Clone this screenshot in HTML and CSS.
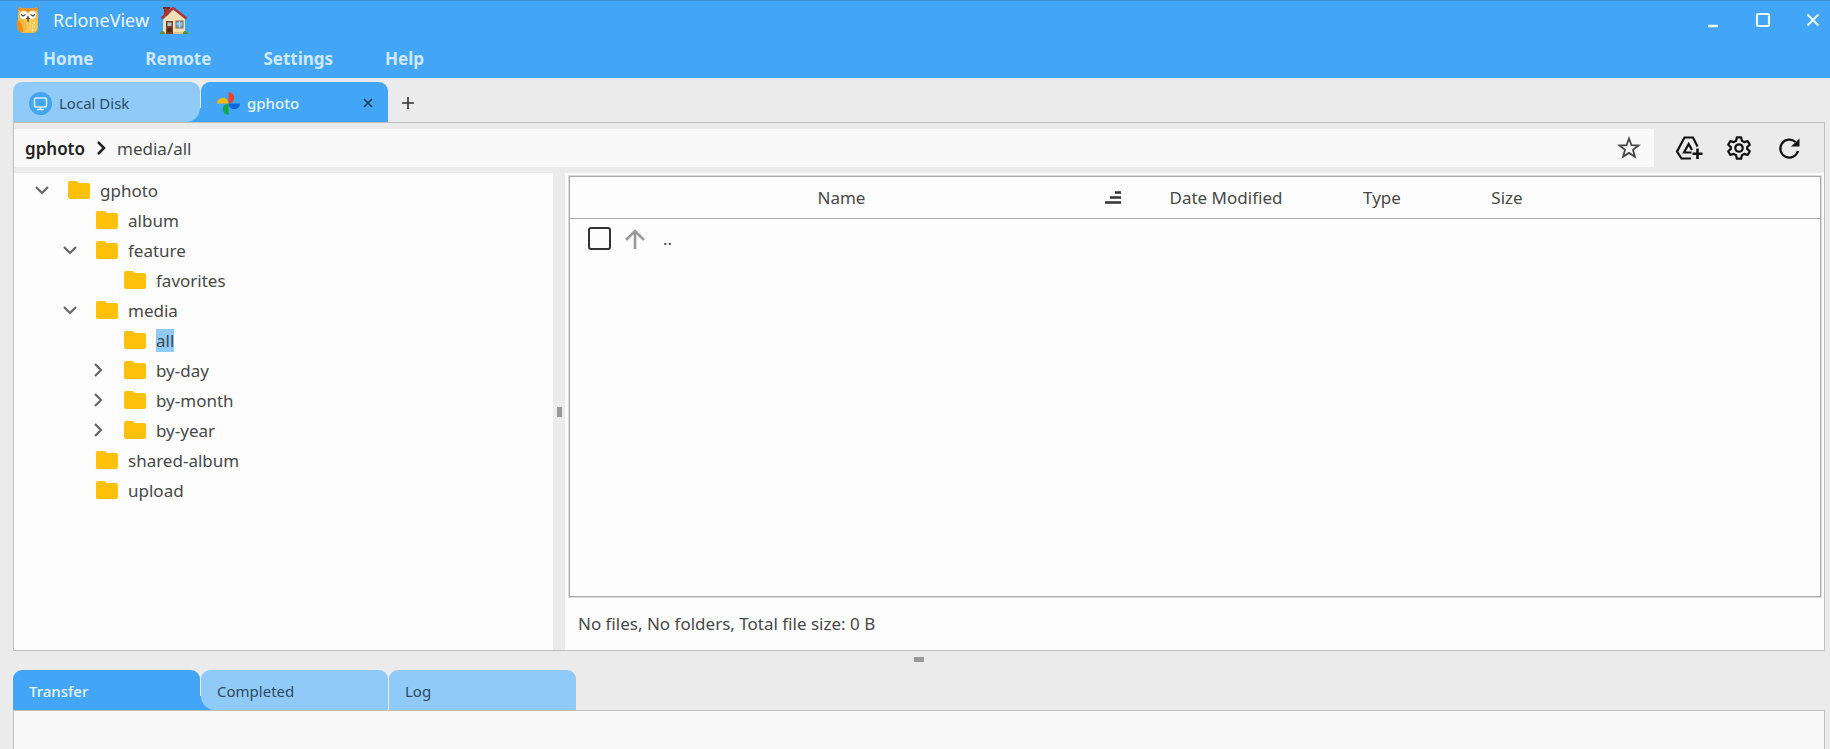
FILE: index.html
```
<!DOCTYPE html>
<html lang="en">
<head>
<meta charset="UTF-8">
<meta name="viewport" content="width=device-width, initial-scale=1">
<title>RcloneView</title>
<link rel="stylesheet" href="styles.css">
</head>
<body>
<!-- shared icons -->
<svg class="sprite" aria-hidden="true">
	<symbol id="folder" viewBox="0 0 22 18"><path fill="#ffc10a" d="M2 0h6.500l2.500 2h9a2 2 0 0 1 2 2v12a2 2 0 0 1-2 2H2a2 2 0 0 1-2-2V2a2 2 0 0 1 2-2z"/></symbol>
	<symbol id="down" viewBox="0 0 14 14"><path d="M1 4l6 6 6-6" fill="none" stroke="#666" stroke-width="2.200"/></symbol>
	<symbol id="right" viewBox="0 0 14 14"><path d="M4 1l6 6-6 6" fill="none" stroke="#666" stroke-width="2.200"/></symbol>
</svg>
<header class="header">
	<div class="title-bar">
		<svg class="owl" viewBox="0 0 22 26">
			<path fill="#f9b73c" d="M2 0l4 1.500h10L20 0l1 7v13q0 6-6 6H7q-6 0-6-6V7z"/>
			<path fill="#fdc650" d="M6 12h14v8q0 5-6 5H8q4-5-2-13z"/>
			<path fill="#f28c1b" d="M1 0l4.500 1.500h11L21 0l-1 4-5-1-4 2-4-2-5 1zM0 13q6 2 6 12-6 0-6-6z"/>
			<circle cx="6.800" cy="8" r="4" fill="#fff"/>
			<circle cx="15.200" cy="8" r="4" fill="#fff"/>
			<path d="M4 7.500l2 1.500 2.500-1.500M13.500 7.500L16 9l2-1.500M11 9v6M9 11.500h4" fill="none" stroke="#444" stroke-width="1.200"/>
			<path d="M13 17h1M17 16h1M15 19h1M12 21h1M17 20h1M15 23h1" stroke="#fff" stroke-width="1.500"/>
		</svg>
		<h1 class="app-name">RcloneView</h1>
		<svg class="house" viewBox="0 0 28 29">
			<path fill="#99382e" d="M4 2h5v8H4z"/>
			<path fill="#7a2822" d="M3 1h7v2H3z"/>
			<path fill="#f3dfb6" d="M3 14L14 3l11 10v15H3z"/>
			<path fill="#dcc08d" d="M3 26h22v2H3z"/>
			<path d="M1.500 12.500L13 2l13.500 10.500" fill="none" stroke="#b8322c" stroke-width="2.400"/>
			<path fill="#7c4328" d="M6 15h7v13H6z"/>
			<path fill="#a9c9dc" d="M7.500 16.500h4V20h-4z"/>
			<path fill="#54291b" d="M7.500 22h4v4h-4z"/>
			<path fill="#8c6548" d="M15.500 14.500h8v8h-8z"/>
			<path fill="#68aee3" d="M16.500 15.500h6v6h-6z"/>
			<path d="M19.500 15.500v6M16.500 18h6" stroke="#bfdcf2"/>
			<path fill="#5c8f35" d="M0 28q0-3 3-3 2 1 2 3zM23 28q0-3 2-3 3 0 3 3z"/>
		</svg>
		<div class="window-buttons">
			<button type="button" aria-label="Minimize"><svg viewBox="0 0 16 16"><path d="M3 14h10" stroke="#e8f4ff" stroke-width="2.500"/></svg></button>
			<button type="button" aria-label="Maximize"><svg viewBox="0 0 16 16"><rect x="2" y="2" width="12" height="12" rx="1" fill="none" stroke="#e8f4ff" stroke-width="2.200"/></svg></button>
			<button type="button" aria-label="Close window"><svg viewBox="0 0 16 16"><path d="M2.500 2.500l11 11M13.500 2.500l-11 11" stroke="#e8f4ff" stroke-width="2.200"/></svg></button>
		</div>
	</div>
	<nav class="menu">
		<button type="button">Home</button>
		<button type="button">Remote</button>
		<button type="button">Settings</button>
		<button type="button">Help</button>
	</nav>
</header>
<main class="workspace">
	<div class="tabs">
		<button type="button" class="tab before-active">
			<svg class="tab-icon" viewBox="0 0 23 23">
				<circle cx="11.500" cy="11.500" r="11.500" fill="#43a5ef"/>
				<rect x="5.500" y="6" width="12" height="9" rx="1.500" fill="none" stroke="#d9eeff" stroke-width="1.600"/>
				<path d="M8 17.500h7M11.500 15v2" stroke="#d9eeff" stroke-width="1.600"/>
			</svg>
			<span>Local Disk</span>
		</button>
		<div class="tab active">
			<svg class="tab-icon" viewBox="0 0 23 23">
				<path fill="#ea4335" d="M11.500 0a5.700 5.700 0 0 1 0 11.500z"/>
				<path fill="#0f66de" d="M23 11.500a5.700 5.700 0 0 1-11.500 0z"/>
				<path fill="#13a94a" d="M11.500 23a5.700 5.700 0 0 1 0-11.500z"/>
				<path fill="#fbb90a" d="M0 11.500a5.700 5.700 0 0 1 11.500 0z"/>
			</svg>
			<span>gphoto</span>
			<button type="button" class="tab-close" aria-label="Close tab"><svg viewBox="0 0 10 10"><path d="M1 1l8 8M9 1L1 9" stroke="#1d3a55" stroke-width="1.600"/></svg></button>
		</div>
		<button type="button" class="tab-add" aria-label="New tab"><svg viewBox="0 0 12 12"><path d="M6 0v12M0 6h12" stroke="#333" stroke-width="1.600"/></svg></button>
	</div>
	<section class="browser">
		<div class="toolbar">
			<div class="path">
				<a href="#" class="path-root">gphoto</a>
				<svg class="path-arrow" viewBox="0 0 10 14"><path d="M2 1l6 6-6 6" fill="none" stroke="#222" stroke-width="2.500"/></svg>
				<a href="#">media/all</a>
				<button type="button" class="star" aria-label="Favorite"><svg viewBox="0 0 24 24"><path d="M12 2.500l2.500 6.700 7.100.3-5.600 4.400 1.900 6.900L12 16.900l-5.900 3.900L8 13.900 2.400 9.500l7.100-.3z" fill="none" stroke="#444" stroke-width="1.800"/></svg></button>
			</div>
			<div class="tools">
				<button type="button" aria-label="Mount drive">
					<svg class="drive" viewBox="0 0 28 26" fill="none" stroke="#111" stroke-width="2.200">
						<path d="M16 23.500H6.500L2 16.500 9.500 2.500h8.500l4.500 9"/>
						<path d="M16.500 17.500H9l4.700-8.500 3.300 6"/>
						<path d="M22.500 13.500v10.500M17.500 18.700h10" stroke-width="2.600"/>
					</svg>
				</button>
				<button type="button" aria-label="Preferences">
					<svg viewBox="0 0 28 28" fill="none" stroke="#111" stroke-width="2.400" stroke-linejoin="round">
						<path d="M11.700 2.500h4.600l.8 3.700 2.600 1.500 3.600-1.200 2.300 4L22.800 13v2l2.800 2.500-2.300 4-3.600-1.200-2.600 1.500-.8 3.700h-4.600l-.8-3.700-2.600-1.500-3.600 1.200-2.300-4L5.200 15v-2l-2.800-2.500 2.300-4 3.600 1.200 2.600-1.500z"/>
						<circle cx="14" cy="14" r="4"/>
					</svg>
				</button>
				<button type="button" aria-label="Refresh">
					<svg viewBox="0 0 26 26"><path d="M22 16A9 9 0 1 1 19.500 7" fill="none" stroke="#111" stroke-width="2.200"/><path fill="#111" d="M23.500 3.500v8H15z"/></svg>
				</button>
			</div>
		</div>
		<div class="panes">
			<ul class="tree">
				<li>
					<div class="node"><button type="button" class="toggle" aria-label="Collapse"><svg><use href="#down"/></svg></button><svg class="folder"><use href="#folder"/></svg><span>gphoto</span></div>
					<ul>
						<li><div class="node leaf"><svg class="folder"><use href="#folder"/></svg><span>album</span></div></li>
						<li>
							<div class="node"><button type="button" class="toggle" aria-label="Collapse"><svg><use href="#down"/></svg></button><svg class="folder"><use href="#folder"/></svg><span>feature</span></div>
							<ul>
								<li><div class="node leaf"><svg class="folder"><use href="#folder"/></svg><span>favorites</span></div></li>
							</ul>
						</li>
						<li>
							<div class="node"><button type="button" class="toggle" aria-label="Collapse"><svg><use href="#down"/></svg></button><svg class="folder"><use href="#folder"/></svg><span>media</span></div>
							<ul>
								<li><div class="node leaf"><svg class="folder"><use href="#folder"/></svg><span class="selected">all</span></div></li>
								<li><div class="node"><button type="button" class="toggle" aria-label="Expand"><svg><use href="#right"/></svg></button><svg class="folder"><use href="#folder"/></svg><span>by-day</span></div></li>
								<li><div class="node"><button type="button" class="toggle" aria-label="Expand"><svg><use href="#right"/></svg></button><svg class="folder"><use href="#folder"/></svg><span>by-month</span></div></li>
								<li><div class="node"><button type="button" class="toggle" aria-label="Expand"><svg><use href="#right"/></svg></button><svg class="folder"><use href="#folder"/></svg><span>by-year</span></div></li>
							</ul>
						</li>
						<li><div class="node leaf"><svg class="folder"><use href="#folder"/></svg><span>shared-album</span></div></li>
						<li><div class="node leaf"><svg class="folder"><use href="#folder"/></svg><span>upload</span></div></li>
					</ul>
				</li>
			</ul>
			<div class="splitter vertical"></div>
			<div class="files">
				<div class="file-list">
					<table>
						<colgroup><col class="col-name"><col class="col-date"><col class="col-type"><col class="col-size"><col></colgroup>
						<thead>
							<tr>
								<th><div class="sortable"><span>Name</span><svg viewBox="0 0 16 13"><path d="M10 1.500h6M5 6.500h11M0 11.500h16" stroke="#333" stroke-width="2.400"/></svg></div></th>
								<th>Date Modified</th>
								<th>Type</th>
								<th>Size</th>
								<th></th>
							</tr>
						</thead>
						<tbody>
							<tr>
								<td colspan="5">
									<label class="file">
										<input type="checkbox">
										<svg viewBox="0 0 20 20"><path d="M10 20V2M1 11l9-9 9 9" fill="none" stroke="#999" stroke-width="2.600"/></svg>
										<span>..</span>
									</label>
								</td>
							</tr>
						</tbody>
					</table>
				</div>
				<p class="status">No files, No folders, Total file size: 0 B</p>
			</div>
		</div>
	</section>
	<div class="splitter horizontal"></div>
	<div class="tabs">
		<button type="button" class="tab active">Transfer</button>
		<button type="button" class="tab after-active">Completed</button>
		<button type="button" class="tab">Log</button>
	</div>
	<section class="jobs"></section>
</main>
</body>
</html>
```
FILE: styles.css
```
*{
	box-sizing:border-box;
	margin:0;
	padding:0;
}
body{
	height:100vh;
	display:flex;
	flex-direction:column;
	overflow:hidden;
	background:#ebebeb;
	color:#484848;
	font-family:"Noto Sans",sans-serif;
	font-size:17px;
}
button{
	display:flex;
	align-items:center;
	justify-content:center;
	border:0;
	background:none;
	color:inherit;
	font:inherit;
	cursor:pointer;
}
a{
	color:inherit;
	text-decoration:none;
}
ul{
	list-style:none;
}
svg{
	flex:none;
	display:block;
}
.sprite{
	position:absolute;
	width:0;
	height:0;
}
/* header */
.header{
	background:#42a5f6;
	border-top:1px solid #3b8fd5;
	color:#f0f8ff;
}
.title-bar{
	height:38px;
	padding-left:17px;
	display:flex;
	align-items:center;
}
.owl{
	width:22px;
	height:26px;
}
.app-name{
	margin:0 11px 0 14px;
	font-size:18px;
	font-weight:400;
}
.house{
	width:28px;
	height:29px;
}
.window-buttons{
	margin-left:auto;
	display:flex;
	gap:16px;
}
.window-buttons button{
	width:34px;
	height:34px;
}
.window-buttons svg{
	width:16px;
	height:16px;
}
.menu{
	height:39px;
	padding-left:43px;
	display:flex;
	align-items:center;
	gap:52px;
	color:#cfe8fe;
	font-weight:700;
}
/* tabs */
.workspace{
	flex:1;
	min-height:0;
	padding:4px 5px 0 13px;
	display:flex;
	flex-direction:column;
}
.tabs{
	height:40px;
	display:flex;
	gap:1px;
	font-size:15px;
}
.tab{
	position:relative;
	width:187px;
	height:40px;
	padding:2px 16px 0 16px;
	display:flex;
	align-items:center;
	justify-content:flex-start;
	gap:7px;
	background:#90caf9;
	border-radius:9px 9px 0 0;
	color:#2f4a60;
}
.tab.active{
	background:#42a5f6;
	color:#eaf5ff;
	font-weight:500;
}
.before-active{
	z-index:1;
	border-bottom-right-radius:14px;
}
.before-active + .active:before{ /* fills the corner under the neighbour tab */
	content:'';
	position:absolute;
	left:-14px;
	bottom:0;
	width:28px;
	height:14px;
	background:#42a5f6;
}
.active:has(+ .after-active):after{
	content:'';
	position:absolute;
	right:-14px;
	bottom:0;
	width:28px;
	height:14px;
	background:#42a5f6;
}
.after-active{
	z-index:1;
	border-bottom-left-radius:14px;
}
.tab-icon{
	width:23px;
	height:23px;
}
.tab-close{
	width:20px;
	height:20px;
	margin-left:auto;
	margin-right:-6px;
}
.tab-close svg{
	width:10px;
	height:10px;
}
.tab-add{
	width:38px;
	padding-top:2px;
}
.tab-add svg{
	width:12px;
	height:12px;
}
/* browser */
.browser{
	flex:1;
	min-height:0;
	display:flex;
	flex-direction:column;
	border:1px solid #bfbfbf;
}
.toolbar{
	height:50px;
	padding:6px 17px 6px 0;
	display:flex;
	justify-content:space-between;
}
.path{
	flex:1;
	padding:0 13px 0 11px;
	display:flex;
	align-items:center;
	gap:11px;
	background:#f9f9f9;
}
.path-root{
	color:#222;
	font-weight:600;
}
.path-arrow{
	width:10px;
	height:14px;
}
.star{
	margin-left:auto;
}
.star svg{
	width:24px;
	height:24px;
}
.tools{
	margin-left:17px;
	display:flex;
	align-items:center;
	gap:14px;
}
.tools button{
	width:36px;
	height:36px;
}
.tools svg{
	width:26px;
	height:26px;
}
.tools .drive{
	width:28px;
}
.panes{
	flex:1;
	min-height:0;
	display:flex;
	background:#fdfdfd;
}
/* folder tree */
.tree{
	width:539px;
	padding:2px 0 0 14px;
	overflow:auto;
}
.tree ul{
	padding-left:28px;
}
.node{
	height:30px;
	display:flex;
	align-items:center;
	gap:10px;
}
.leaf{
	padding-left:40px;
}
.toggle{
	width:28px;
	height:30px;
	margin-right:2px;
}
.toggle svg{
	width:14px;
	height:14px;
}
.folder{
	width:22px;
	height:18px;
}
.selected{
	background:#90caf9;
}
/* splitters */
.splitter{
	display:flex;
	align-items:center;
	justify-content:center;
	background:#ebebeb;
}
.splitter:after{
	content:'';
	background:#999;
}
.vertical{
	width:12px;
	cursor:col-resize;
}
.vertical:after{
	width:5px;
	height:10px;
}
.horizontal{
	height:19px;
	padding-bottom:3px;
	cursor:row-resize;
}
.horizontal:after{
	width:10px;
	height:5px;
}
/* file list */
.files{
	flex:1;
	min-width:0;
	padding:3px 3px 0 4px;
	display:flex;
	flex-direction:column;
}
.file-list{
	flex:1;
	border:1px solid #aaa;
	outline:1px solid #dcdcdc;
}
table{
	width:100%;
	table-layout:fixed;
	border-collapse:collapse;
}
.col-name{
	width:575px;
}
.col-date{
	width:162px;
}
.col-type{
	width:150px;
}
.col-size{
	width:100px;
}
th{
	height:41px;
	border-bottom:1px solid #aaa;
	font-weight:400;
}
.sortable{
	padding:0 24px 0 8px;
	display:flex;
	align-items:center;
}
.sortable span{
	flex:1;
}
.sortable svg{
	width:16px;
	height:13px;
}
.file{
	height:40px;
	padding-left:18px;
	display:flex;
	align-items:center;
	gap:14px;
}
.file input{
	appearance:none;
	width:23px;
	height:23px;
	border:2px solid #333;
	border-radius:3px;
}
.file svg{
	width:20px;
	height:20px;
}
.file span{
	padding-left:4px;
}
.status{
	padding-left:9px;
	line-height:53px;
}
.jobs{
	height:39px;
	border:1px solid #bfbfbf;
	border-bottom:0;
	background:#f9f9f9;
}
```
